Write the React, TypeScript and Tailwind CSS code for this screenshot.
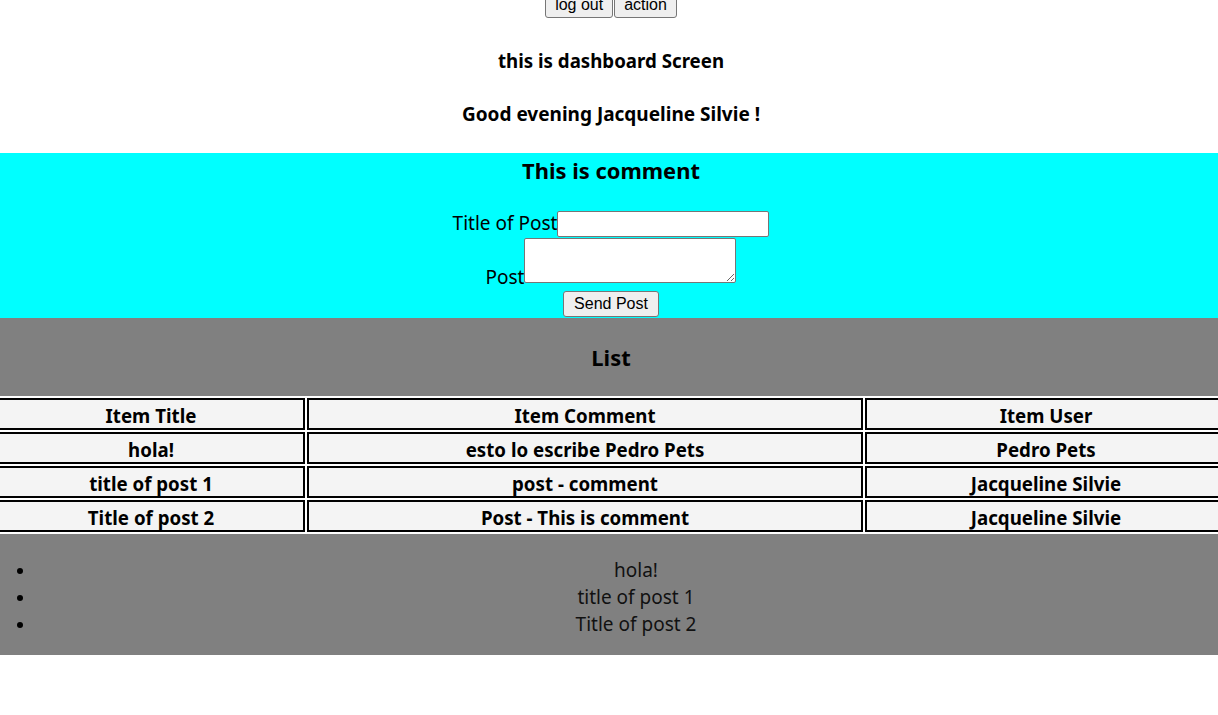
import React from "react";

const rows = [
  ["hola!", "esto lo escribe Pedro Pets", "Pedro Pets"],
  ["title of post 1", "post - comment", "Jacqueline Silvie"],
  ["Title of post 2", "Post - This is comment", "Jacqueline Silvie"],
];

const btnBase =
  "h-[26px] bg-[#efefef] border border-[#767676] rounded-[3px] text-[16px] leading-none text-black font-['Liberation_Sans',Arial,sans-serif]";

const cell =
  "h-[32px] p-0 pt-[3px] border-2 border-black bg-[#f4f4f4] text-center leading-[25px] font-bold";

export default function App() {
  return (
    <div className="w-full min-h-[715px] overflow-hidden bg-white">
      <div className="w-[calc(100%+4px)] font-['Noto_Sans',sans-serif] text-black">
        <div className="flex justify-center gap-[1px] -mt-[8px]">
          <button className={`${btnBase} px-[9px]`}>log out</button>
          <button className={`${btnBase} px-[9px]`}>action</button>
        </div>
        <h4 className="mt-[30px] text-center text-[18.7px] font-bold leading-[26px]">
          this is dashboard Screen
        </h4>
        <h4 className="mt-[27px] text-center text-[19px] font-bold leading-[26px]">
          Good evening Jacqueline Silvie !
        </h4>

        <div className="mt-[26px] bg-[#00ffff] pt-[2px] pb-[1px]">
          <h3 className="text-center text-[21.9px] font-bold leading-[31px]">This is comment</h3>
          <div className="mt-[25px] flex justify-center items-end text-[19px]">
            <span className="leading-[19px] mb-[4px]">Title of Post</span>
            <input
              type="text"
              className="w-[212px] h-[26px] bg-white border border-[#767676] rounded-[2px] outline-none"
            />
          </div>
          <div className="mt-[1px] flex justify-center items-end text-[19px]">
            <span className="leading-[19px] -mb-[4px]">Post</span>
            <textarea className="block w-[212px] h-[45px] bg-white border border-[#767676] rounded-[2px] outline-none" />
          </div>
          <div className="mt-[8px] flex justify-center">
            <button className={`${btnBase} px-[10px]`}>Send Post</button>
          </div>
        </div>

        <div className="bg-[#808080] pt-[24px] pb-[17px]">
          <h3 className="text-center text-[21.9px] font-bold leading-[31px]">List</h3>
          <table className="mt-[23px] -ml-[5px] w-[1234px] table-fixed border-separate border-spacing-[2px] bg-white text-[18.7px] font-bold">
            <colgroup>
              <col className="w-[308px]" />
              <col className="w-[556px]" />
              <col className="w-[362px]" />
            </colgroup>
            <thead>
              <tr>
                {["Item Title", "Item Comment", "Item User"].map((h) => (
                  <th key={h} className={cell}>
                    {h}
                  </th>
                ))}
              </tr>
            </thead>
            <tbody>
              {rows.map((r, i) => (
                <tr key={i}>
                  {r.map((c, j) => (
                    <td key={j} className={cell}>
                      {c}
                    </td>
                  ))}
                </tr>
              ))}
            </tbody>
          </table>
          <ul className="mt-[23px] text-[19px] leading-[27px] text-[#111]">
            {rows.map((r, i) => (
              <li key={i} className="flex items-center">
                <span className="w-[50px] flex">
                  <span className="ml-[17px] w-[6px] h-[6px] rounded-full bg-black" />
                </span>
                <span className="flex-1 text-center">{r[0]}</span>
              </li>
            ))}
          </ul>
        </div>
      </div>
    </div>
  );
}
